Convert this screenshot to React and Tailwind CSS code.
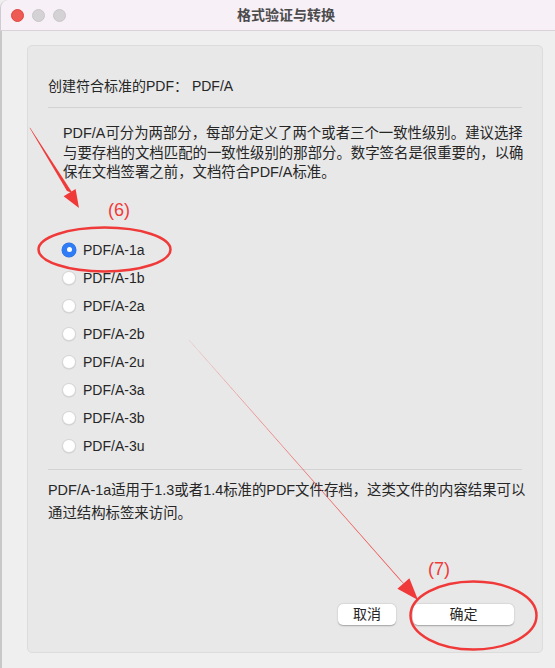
import React from "react";

const FONT = { fontFamily: '"Liberation Sans", "Noto Sans CJK SC", sans-serif' };

const options = ["PDF/A-1a", "PDF/A-1b", "PDF/A-2a", "PDF/A-2b", "PDF/A-2u", "PDF/A-3a", "PDF/A-3b", "PDF/A-3u"];

function Radio({ checked }) {
  if (checked) {
    return (
      <span className="w-[14px] h-[14px] rounded-full bg-[#2f7cf6] flex items-center justify-center shadow-[0_0_0_0.5px_#2a6fd9]">
        <span className="w-[5px] h-[5px] rounded-full bg-white" />
      </span>
    );
  }
  return (
    <span className="w-[14px] h-[14px] rounded-full bg-white border border-[#d6d6d6] shadow-[0_0.5px_1px_rgba(0,0,0,0.12)]" />
  );
}

export default function App() {
  return (
    <div className="w-[555px] h-[668px] relative overflow-hidden bg-[#efefef] flex flex-col text-[#262626]" style={FONT}>
      {/* title bar */}
      <div className="h-[31px] shrink-0 bg-[#f7f0f7] border-b border-[#d9d3d9] relative flex items-center rounded-tl-[8px] border-l border-l-[#d0cbd0]">
        <div className="flex items-center gap-[8px] pl-[10px]">
          <span className="w-[13px] h-[13px] rounded-full bg-[#ee5b54] border border-[#e0443d]" />
          <span className="w-[13px] h-[13px] rounded-full bg-[#d5d2d6] border border-[#c9c6ca]" />
          <span className="w-[13px] h-[13px] rounded-full bg-[#d5d2d6] border border-[#c9c6ca]" />
        </div>
        <div className="absolute left-[235px] w-[100px] top-0 h-[31px] flex items-center justify-center text-[14px] font-semibold text-[#4b4b4b] whitespace-nowrap">
          格式验证与转换
        </div>
      </div>

      {/* body */}
      <div className="flex-1 border-l-2 border-[#c8c8c8] pl-[25px] pt-[14px]">
        <div className="w-[516px] h-[608px] rounded-[5px] bg-[#e8e8e8] border border-[#dcdcdc] flex flex-col px-[20px] pt-[30px] pb-[27px] text-[14px] whitespace-nowrap">
          <div className="leading-[20px] h-[20px]">创建符合标准的PDF：&nbsp;PDF/A</div>
          <div className="mt-[11px] h-px bg-[#d3d3d3]" />
          <div className="mt-[16px] pl-[15px] leading-[19.5px] text-[14.4px]">
            <div>PDF/A可分为两部分，每部分定义了两个或者三个一致性级别。建议选择</div>
            <div>与要存档的文档匹配的一致性级别的那部分。数字签名是很重要的，以确</div>
            <div>保在文档签署之前，文档符合PDF/A标准。</div>
          </div>
          <div className="mt-[53px] flex flex-col">
            {options.map((o, i) => (
              <div key={o} className="h-[28px] flex items-center pl-[14px] gap-[7px]">
                <Radio checked={i === 0} />
                <span className="leading-[20px]">{o}</span>
              </div>
            ))}
          </div>
          <div className="mt-[9px] h-px bg-[#d3d3d3]" />
          <div className="mt-[9px] leading-[23px] text-[14.4px]">
            <div>PDF/A-1a适用于1.3或者1.4标准的PDF文件存档，这类文件的内容结果可以</div>
            <div>通过结构标签来访问。</div>
          </div>
          <div className="mt-auto flex justify-end gap-[17px] pr-[8px]">
            <button className="w-[58px] h-[21px] rounded-[5px] bg-white shadow-[0_0.5px_1.5px_rgba(0,0,0,0.3)] text-[14px] leading-[21px] text-[#262626]">
              取消
            </button>
            <button className="w-[101px] h-[21px] rounded-[5px] bg-white shadow-[0_0.5px_1.5px_rgba(0,0,0,0.3)] text-[14px] leading-[21px] text-[#262626]">
              确定
            </button>
          </div>
        </div>
      </div>

      {/* annotations */}
      <svg className="absolute left-0 top-0 pointer-events-none" width="555" height="668" viewBox="0 0 555 668">
        <polygon points="29.4,127.6 30.6,128.4 72.5,193 67,191" fill="#f03a3a" />
        <polygon points="79,208 63.6,196.3 75.6,188.9" fill="#f03a3a" />
        <ellipse cx="104.5" cy="249.5" rx="66" ry="22" fill="none" stroke="#f03a3a" strokeWidth="2.5" />
        <text x="108" y="216" fontSize="18" fill="#f03a3a" fontFamily="Liberation Sans, sans-serif">(6)</text>

        <polygon points="188.5,339.6 189.5,340.4 406.5,586.5 400.3,580.5" fill="#f03a3a" />
        <polygon points="418,600 397.4,588.8 409.4,578.2" fill="#f03a3a" />
        <ellipse cx="473.5" cy="615.5" rx="63" ry="34" fill="none" stroke="#f03a3a" strokeWidth="2.5" />
        <text x="428" y="575" fontSize="18" fill="#f03a3a" fontFamily="Liberation Sans, sans-serif">(7)</text>
      </svg>
    </div>
  );
}
